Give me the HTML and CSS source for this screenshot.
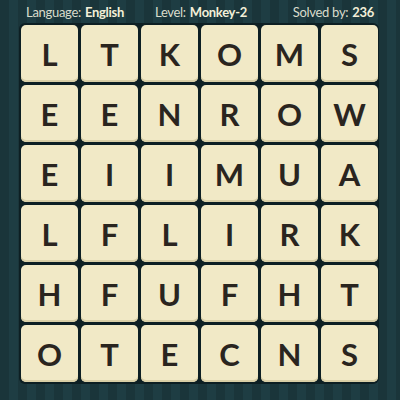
FILE: index.html
```html
<!DOCTYPE html>
<html>
<head>
<meta charset="utf-8">
<link rel="stylesheet" href="styles.css">
</head>
<body>
<div class="header">
  <span class="item lang">Language: <b>English</b></span>
  <span class="item level">Level: <b>Monkey-2</b></span>
  <span class="item solved">Solved by: <b>236</b></span>
</div>
<div class="board">
  <div class="tile">L</div><div class="tile">T</div><div class="tile">K</div><div class="tile">O</div><div class="tile">M</div><div class="tile">S</div>
  <div class="tile">E</div><div class="tile">E</div><div class="tile">N</div><div class="tile">R</div><div class="tile">O</div><div class="tile">W</div>
  <div class="tile">E</div><div class="tile">I</div><div class="tile">I</div><div class="tile">M</div><div class="tile">U</div><div class="tile">A</div>
  <div class="tile">L</div><div class="tile">F</div><div class="tile">L</div><div class="tile">I</div><div class="tile">R</div><div class="tile">K</div>
  <div class="tile">H</div><div class="tile">F</div><div class="tile">U</div><div class="tile">F</div><div class="tile">H</div><div class="tile">T</div>
  <div class="tile">O</div><div class="tile">T</div><div class="tile">E</div><div class="tile">C</div><div class="tile">N</div><div class="tile">S</div>
</div>
</body>
</html>
```
FILE: styles.css
```css
html, body {
  margin: 0;
  padding: 0;
}
body {
  width: 400px;
  height: 400px;
  overflow: hidden;
  background-color: #1a363b;
  background-image: repeating-linear-gradient(90deg, #1a353a 0px, #1a353a 9px, #1e3d43 9px, #1e3d43 18px);
  font-family: Lato, "Open Sans", sans-serif;
}
.header {
  height: 23px;
  display: flex;
  align-items: center;
  color: #d9dccb;
  font-size: 13px;
  letter-spacing: -0.3px;
}
.item {
  white-space: nowrap;
}
.item b {
  font-weight: 700;
  color: #f3efd8;
  margin-left: 1px;
}
.lang { margin-left: 26px; }
.level { margin-left: 31px; }
.solved { margin-left: auto; margin-right: 26px; }
.board {
  margin-left: 19px;
  width: 356px;
  padding: 2px;
  display: grid;
  grid-template-columns: repeat(6, 57px);
  grid-auto-rows: 57px;
  gap: 3px;
  background: #0d1f23;
  border-radius: 6px;
}
.tile {
  background: #f1e9c6;
  border-radius: 5px;
  box-shadow: inset 0 -2px 0 #d9cfa6;
  display: flex;
  align-items: center;
  justify-content: center;
  font-size: 31px;
  font-weight: 700;
  color: #2a251f;
}
```
